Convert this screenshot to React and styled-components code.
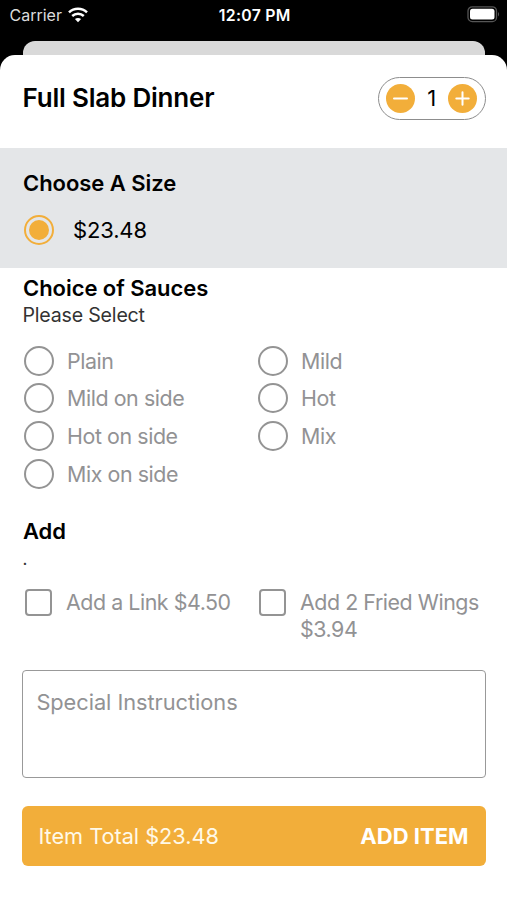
import React from "react";
import styled, { createGlobalStyle } from "styled-components";

const AMBER = "#f2ae3a";
const GREY = "#929294";

const GlobalStyle = createGlobalStyle`
  * { box-sizing: border-box; }
  html, body { margin: 0; background: #000; }
  body { font-family: Inter, "Liberation Sans", sans-serif; color: #000; }
  h1, h2, p { margin: 0; }
  button { font-family: inherit; }
`;

const Screen = styled.div`
  display: flex;
  flex-direction: column;
  width: 507px;
  height: 900px;
  overflow: hidden;
  background: #000;
`;

const StatusBar = styled.header`
  display: grid;
  grid-template-columns: 1fr auto 1fr;
  align-items: center;
  height: 41px;
  flex: none;
  padding: 0 7px 11px 9.5px;
  color: #fff;
`;

const Carrier = styled.div`
  display: flex;
  align-items: center;
  gap: 6px;
  color: #dcdcdc;
  font-size: 16px;
  letter-spacing: 0;
  line-height: 20px;
`;

const Clock = styled.div`
  padding-top: 1px;
  font-size: 15.8px;
  font-weight: 600;
  letter-spacing: 0.3px;
  line-height: 20px;
`;

const BatterySlot = styled.div`
  display: flex;
  justify-content: flex-end;
  padding-bottom: 2px;
`;

const BackCard = styled.div`
  flex: none;
  height: 14px;
  margin: 0 22px 0 23px;
  border-radius: 12px 12px 0 0;
  background: #d9d9d9;
`;

const Sheet = styled.main`
  flex: 1;
  display: flex;
  flex-direction: column;
  border-radius: 15px 15px 0 0;
  background: #fff;
`;

const SheetHeader = styled.div`
  display: flex;
  align-items: center;
  justify-content: space-between;
  height: 93px;
  padding: 0 21.5px 7px 22.5px;
`;

const Title = styled.h1`
  font-size: 26px;
  font-weight: 600;
  letter-spacing: -0.2px;
  line-height: 32px;
  white-space: nowrap;
`;

const Stepper = styled.div`
  display: flex;
  align-items: center;
  justify-content: space-between;
  width: 107.5px;
  height: 43px;
  padding: 0 7px;
  border: 1.4px solid #8d8d8d;
  border-radius: 22px;
  font-size: 22px;
`;

const RoundButton = styled.button`
  display: flex;
  padding: 0;
  border: 0;
  border-radius: 50%;
  background: ${AMBER};
`;

const SizeSection = styled.section`
  height: 119.5px;
  padding: 22px 22px 0;
  background: #e4e6e8;
`;

const Heading = styled.h2`
  padding-left: 1px;
  font-size: 22px;
  font-weight: 600;
  letter-spacing: -0.05px;
  line-height: 26px;
`;

const SizeChoice = styled.div`
  display: flex;
  align-items: center;
  gap: 19px;
  height: 30px;
  margin-top: 19px;
  padding-left: 2px;
  font-size: 22px;
  letter-spacing: -0.15px;
`;

const Radio = styled.span`
  display: flex;
  align-items: center;
  justify-content: center;
  flex: none;
  width: 30px;
  height: 30px;
  border: 2px solid ${(p) => (p.$checked ? AMBER : "#949494")};
  border-radius: 50%;

  &::after {
    content: "";
    width: 20px;
    height: 20px;
    border-radius: 50%;
    background: ${(p) => (p.$checked ? AMBER : "transparent")};
  }
`;

const Checkbox = styled.span`
  flex: none;
  width: 27px;
  height: 27px;
  border: 2px solid #949494;
  border-radius: 4px;
`;

const Section = styled.section`
  padding: ${(p) => p.$top}px 22px 0;
`;

const Note = styled.p`
  padding-left: 0.5px;
  color: #333;
  font-size: ${(p) => p.$size || 19.6}px;
  letter-spacing: -0.2px;
  line-height: ${(p) => p.$line || 28}px;
`;

const Columns = styled.div`
  display: grid;
  grid-template-columns: 234px 1fr;
  align-items: start;
  margin-top: ${(p) => p.$top}px;
  padding-left: ${(p) => p.$left}px;
`;

const Option = styled.div`
  display: flex;
  align-items: flex-start;
  gap: 13px;
  height: 37.7px;
  color: ${GREY};
  font-size: 21.4px;
  letter-spacing: -0.42px;
  line-height: 30px;
`;

const Extra = styled(Option)`
  gap: 14px;
  height: auto;
  letter-spacing: -0.45px;
  line-height: 27px;
`;

const Instructions = styled.div`
  height: 108px;
  margin: 27px 21.5px 0 22.4px;
  padding: 17px 13px;
  border: 1px solid #999;
  border-radius: 4px;
  color: ${GREY};
  font-size: 21.8px;
  letter-spacing: -0.05px;
  line-height: 28px;
`;

const AddBar = styled.button`
  display: flex;
  align-items: center;
  justify-content: space-between;
  height: 60px;
  margin: 28px 21.5px 0 22.4px;
  padding: 0 17px 0 16px;
  border: 0;
  border-radius: 6px;
  background: ${AMBER};
  color: #fff;
  font-size: 21.7px;
`;

const Total = styled.span`
  color: #fff9e8;
`;

const AddLabel = styled.span`
  font-size: 22px;
  font-weight: 700;
`;

const WifiIcon = () => (
  <svg width="20" height="16" viewBox="0 0 20 16" fill="none" stroke="#fff" strokeWidth="2.5">
    <path d="M1 5.4C6 .6 14 .6 19 5.4" />
    <path d="M4.2 9C7.5 6 12.5 6 15.8 9" />
    <path d="M10 15.2L6.9 12.1C8.6 10.6 11.4 10.6 13.1 12.1Z" fill="#fff" stroke="none" />
  </svg>
);

const BatteryIcon = () => (
  <svg width="33" height="17" viewBox="0 0 33 17">
    <rect x="1" y="0.8" width="28.5" height="14.8" rx="4.2" fill="none" stroke="#555" strokeWidth="1.3" />
    <rect x="3" y="2.8" width="24.5" height="10.8" rx="2.5" fill="#fff" />
    <path d="M31 6C32.4 6.7 32.4 9.7 31 10.4Z" fill="#555" />
  </svg>
);

const StepIcon = ({ plus }) => (
  <svg width="29" height="29" viewBox="0 0 29 29" stroke="#fff" strokeWidth="2" strokeLinecap="round">
    <path d={plus ? "M8.3 14.5H20.7M14.5 8.3V20.7" : "M8 14.5H21"} />
  </svg>
);

const SAUCES = ["Plain", "Mild", "Mild on side", "Hot", "Hot on side", "Mix", "Mix on side"];

export default function App() {
  return (
    <Screen>
      <GlobalStyle />
      <StatusBar>
        <Carrier>
          Carrier <WifiIcon />
        </Carrier>
        <Clock>12:07 PM</Clock>
        <BatterySlot>
          <BatteryIcon />
        </BatterySlot>
      </StatusBar>
      <BackCard />
      <Sheet>
        <SheetHeader>
          <Title>Full Slab Dinner</Title>
          <Stepper>
            <RoundButton aria-label="Decrease quantity">
              <StepIcon />
            </RoundButton>
            <span>1</span>
            <RoundButton aria-label="Increase quantity">
              <StepIcon plus />
            </RoundButton>
          </Stepper>
        </SheetHeader>
        <SizeSection>
          <Heading>Choose A Size</Heading>
          <SizeChoice>
            <Radio $checked />
            $23.48
          </SizeChoice>
        </SizeSection>
        <Section $top={7}>
          <Heading>Choice of Sauces</Heading>
          <Note>Please Select</Note>
          <Columns $top={17.3} $left={2}>
            {SAUCES.map((name) => (
              <Option key={name}>
                <Radio />
                {name}
              </Option>
            ))}
          </Columns>
        </Section>
        <Section $top={21.4}>
          <Heading>Add</Heading>
          <Note $size={17} $line={30}>.</Note>
          <Columns $top={15} $left={3}>
            <Extra>
              <Checkbox />
              Add a Link $4.50
            </Extra>
            <Extra>
              <Checkbox />
              Add 2 Fried Wings $3.94
            </Extra>
          </Columns>
        </Section>
        <Instructions>Special Instructions</Instructions>
        <AddBar>
          <Total>Item Total $23.48</Total>
          <AddLabel>ADD ITEM</AddLabel>
        </AddBar>
      </Sheet>
    </Screen>
  );
}
